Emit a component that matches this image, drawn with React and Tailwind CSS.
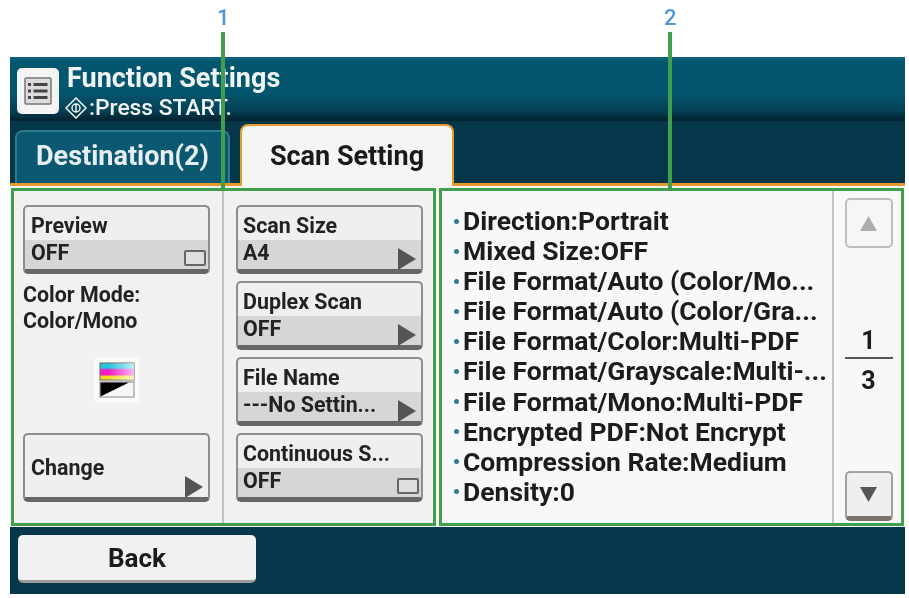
import React from 'react'

const summary = [
  'Direction:Portrait',
  'Mixed Size:OFF',
  'File Format/Auto (Color/Mo...',
  'File Format/Auto (Color/Gra...',
  'File Format/Color:Multi-PDF',
  'File Format/Grayscale:Multi-...',
  'File Format/Mono:Multi-PDF',
  'Encrypted PDF:Not Encrypt',
  'Compression Rate:Medium',
  'Density:0',
]

function Arrow() {
  return (
    <svg className="absolute right-[5px] bottom-[-1px] h-[22px] w-[18px]" viewBox="0 0 18 22">
      <path d="M0 0 L18 11 L0 22 Z" fill="#555" />
    </svg>
  )
}

function Toggle() {
  return <div className="absolute right-[2px] bottom-[3px] h-[16px] w-[22px] rounded-[2px] border-2 border-[#666] bg-[#dedede]" />
}

function SettingButton({ label, value, icon, pad = 'pl-[6px]' }) {
  return (
    <div className="relative flex h-[69px] w-[187px] flex-col rounded-[5px] border-2 border-b-[5px] border-[#8d8d8d] border-b-[#666] bg-[#efefef] text-[21.4px] leading-[24px] font-bold text-[#222]">
      <div className={`h-[33px] truncate pt-[7px] ${pad}`}>{label}</div>
      <div className={`flex-1 bg-[#d6d6d6] pt-[1px] whitespace-nowrap ${pad}`}>{value}</div>
      {icon === 'arrow' ? <Arrow /> : <Toggle />}
    </div>
  )
}

function ColorModeIcon() {
  return (
    <div className="flex h-[46px] w-[45px] items-center justify-center rounded-[4px] bg-[#fafafa]">
      <svg width="36" height="36" viewBox="0 0 36 36">
        <defs>
          <linearGradient id="ink" x1="0" y1="0" x2="0" y2="1">
            <stop offset="0" stopColor="#25c7dd" />
            <stop offset="0.28" stopColor="#25c7dd" />
            <stop offset="0.42" stopColor="#f018c8" />
            <stop offset="0.68" stopColor="#f018c8" />
            <stop offset="0.8" stopColor="#f5e020" />
            <stop offset="1" stopColor="#f5e020" />
          </linearGradient>
          <linearGradient id="fade" x1="0" y1="0" x2="1" y2="0">
            <stop offset="0.25" stopColor="#fff" stopOpacity="0" />
            <stop offset="1" stopColor="#fff" stopOpacity="0.7" />
          </linearGradient>
        </defs>
        <rect x="1" y="1" width="34" height="17" fill="url(#ink)" stroke="#666" />
        <rect x="1" y="1" width="34" height="17" fill="url(#fade)" />
        <rect x="1" y="20" width="34" height="15" fill="#f6f6f6" stroke="#888" />
        <path d="M1.5 20.5 H30 L1.5 34.5 Z" fill="#000" />
      </svg>
    </div>
  )
}

export default function App() {
  return (
    <div className="h-[598px] w-[909px] overflow-hidden bg-white pt-[57px] pl-[10px] font-['Roboto',sans-serif] blur-[0.5px]">
      <div className="relative flex h-[537px] w-[895px] flex-col bg-[#04374a]">
        {/* header */}
        <div className="flex h-[64px] items-start gap-[8px] bg-[linear-gradient(#0b6480,#04566f_8%,#04566f_55%,#053f54_85%,#02202c)] pt-[6px] pl-[7px]">
          <div className="mt-[5px] flex h-[46px] w-[42px] items-center justify-center rounded-[5px] bg-[#f4f4f4]">
            <svg width="28" height="28" viewBox="0 0 28 28" fill="#dcdcdc" stroke="#777">
              <rect x="1" y="1" width="26" height="26" rx="1" strokeWidth="1.5" />
              <path d="M4 7.5h3M9.5 7.5h14M4 14h3M9.5 14h14M4 20.5h3M9.5 20.5h14" stroke="#444" strokeWidth="3" />
            </svg>
          </div>
          <div className="flex flex-col leading-[30px] text-[#f0f4f5]">
            <div className="text-[27px] font-bold">Function Settings</div>
            <div className="flex items-center text-[22.8px] font-medium">
              <svg className="-ml-[2px] mr-[2px]" width="22" height="22" viewBox="0 0 22 22" fill="none" stroke="#f0f4f5" strokeWidth="1.5">
                <path d="M11 1 L21 11 L11 21 L1 11 Z" />
                <circle cx="11" cy="11" r="4" />
                <path d="M11 7v8" />
              </svg>
              <span>:Press START.</span>
            </div>
          </div>
        </div>
        {/* tabs */}
        <div className="flex h-[65px] items-end gap-[10px] border-b-[3px] border-[#e69a2e] bg-[#04374a] pl-[5px]">
          <div className="flex h-[53px] w-[215px] items-center justify-center rounded-t-[8px] border-2 border-b-0 border-[#2f7a8c] bg-[#0b5873] pb-[2px] text-[27px] font-bold text-[#e6eef0]">
            Destination(2)
          </div>
          <div className="relative -mb-[3px] flex h-[62px] w-[214px] items-center justify-center rounded-t-[8px] border-2 border-b-0 border-[#e69a2e] bg-[#f5f5f5] text-[27px] font-bold text-[#1a1a1a]">
            Scan Setting
          </div>
        </div>
        {/* body */}
        <div className="flex h-[341px] gap-[3px] bg-[#f4f4f4] pt-[2px] pl-[1px]">
          <div className="flex h-[338px] w-[425px] border-[3px] border-[#3f9f4c] bg-[#f1f1f1]">
            <div className="flex w-[210px] flex-col border-r-2 border-[#c4c4c4] pt-[14px] pl-[9px]">
              <SettingButton label="Preview" value="OFF" icon="toggle" />
              <div className="mt-[8px] text-[21.4px] leading-[26px] font-bold text-[#222]">
                Color Mode:
                <br />
                Color/Mono
              </div>
              <div className="mt-[23px] flex w-[187px] justify-center">
                <ColorModeIcon />
              </div>
              <div className="relative mt-[30px] flex h-[69px] w-[187px] items-center rounded-[5px] border-2 border-b-[5px] border-[#8d8d8d] border-b-[#666] bg-[#efefef] pt-[5px] pl-[6px] text-[21.4px] font-bold text-[#222]">
                Change
                <Arrow />
              </div>
            </div>
            <div className="flex flex-col gap-[7px] pt-[14px] pl-[12px]">
              <SettingButton label="Scan Size" value="A4" icon="arrow" pad="pl-[5px]" />
              <SettingButton label="Duplex Scan" value="OFF" icon="arrow" pad="pl-[5px]" />
              <SettingButton label="File Name" value="---No Settin..." icon="arrow" pad="pl-[5px]" />
              <SettingButton label="Continuous S..." value="OFF" icon="toggle" pad="pl-[5px]" />
            </div>
          </div>
          <div className="flex h-[338px] w-[465px] border-[3px] border-[#3f9f4c] bg-[#f8f8f8]">
            <ul className="flex w-[390px] flex-col pt-[15px] pl-[12px] text-[26.5px] leading-[30.1px] font-bold text-[#1c1c1c]">
              {summary.map((item) => (
                <li key={item} className="flex items-center whitespace-nowrap">
                  <span className="mr-[4px] h-[5px] w-[5px] shrink-0 rounded-full bg-[#2f7a96]" />
                  {item}
                </li>
              ))}
            </ul>
            <div className="flex flex-1 flex-col items-center border-l-2 border-[#c4c4c4] pt-[7px] pb-[2px] pl-[2px]">
              <div className="flex h-[50px] w-[48px] items-center justify-center rounded-[5px] border-2 border-[#bdbdbd] bg-[#f6f6f6]">
                <svg width="17" height="15" viewBox="0 0 17 15"><path d="M8.5 0 L17 15 H0 Z" fill="#adadad" /></svg>
              </div>
              <div className="mt-[77px] flex w-[48px] flex-col items-center text-[25px] leading-[32px] font-bold text-[#1c1c1c]">
                <div className="h-[34px] w-full border-b-2 border-[#555] text-center">1</div>
                <div className="pt-[6px]">3</div>
              </div>
              <div className="mt-auto flex h-[50px] w-[48px] items-center justify-center rounded-[5px] border-2 border-b-[5px] border-[#a0a0a0] border-b-[#7a7468] bg-[#efefef]">
                <svg width="17" height="15" viewBox="0 0 17 15"><path d="M0 0 H17 L8.5 15 Z" fill="#555" /></svg>
              </div>
            </div>
          </div>
        </div>
        {/* footer */}
        <div className="flex flex-1 items-start bg-[#04374a] pt-[8px] pl-[8px]">
          <div className="flex h-[48px] w-[238px] items-center justify-center rounded-[5px] border-b-[3px] border-[#9a9a9a] bg-[#f1f1f1] pt-[1px] text-[26px] font-bold text-[#1a1a1a]">
            Back
          </div>
        </div>
      </div>
      {/* callouts */}
      <div className="absolute top-[7px] left-[217px] text-[22px] leading-[22px] font-medium text-[#4f97d8]">1</div>
      <div className="absolute top-[32px] left-[221px] h-[157px] w-[4px] bg-[#3f9f4c]" />
      <div className="absolute top-[7px] left-[664px] text-[22px] leading-[22px] font-medium text-[#4f97d8]">2</div>
      <div className="absolute top-[32px] left-[668px] h-[157px] w-[4px] bg-[#3f9f4c]" />
    </div>
  )
}
